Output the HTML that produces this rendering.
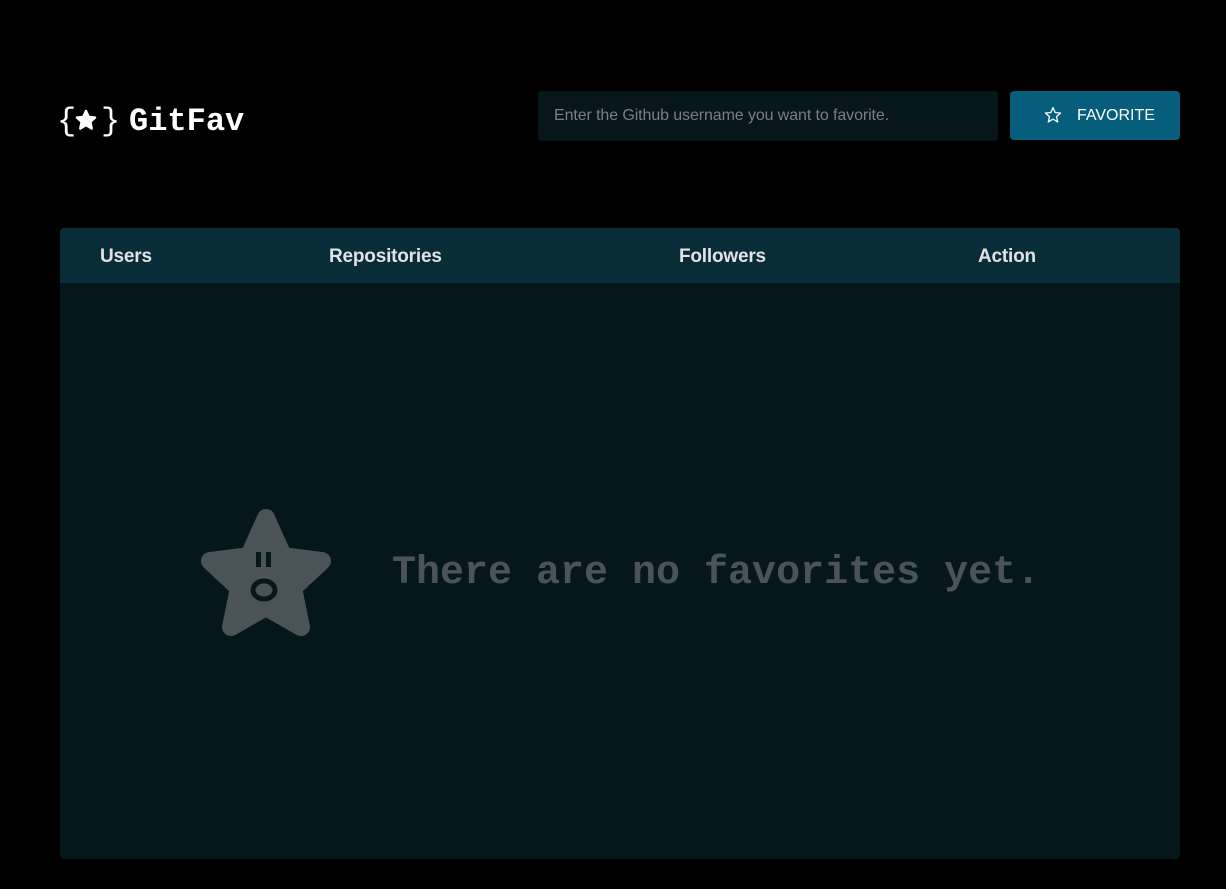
<!DOCTYPE html>
<html><head><meta charset="utf-8"><style>
*{margin:0;padding:0;box-sizing:border-box}
body{width:1226px;height:889px;background:#000;position:relative;overflow:hidden;font-family:"Liberation Sans",sans-serif}
.logo{position:absolute;left:57px;top:103px;height:40px;width:200px;color:#fff;font-family:"Liberation Mono",monospace;font-size:32px;}
.logo span{position:absolute;top:0}
.input{position:absolute;left:538px;top:91px;width:460px;height:50px;background:#06161b;border-radius:4px;color:#7c7c8a;font-size:16px;line-height:50px;padding-left:16px;letter-spacing:-0.1px}
.btn{position:absolute;left:1010px;top:91px;width:170px;height:49px;background:#065e7c;border-radius:4px;color:#fff;font-size:16px;line-height:49px}
.panel{position:absolute;left:60px;top:228px;width:1120px;height:631px;background:#06171c;border-radius:4px;overflow:hidden}
.head{height:55px;background:#092d38;position:relative;color:#e1e1e6;font-weight:bold;font-size:19px;letter-spacing:-0.2px}
.head span{position:absolute;top:18px}
.msg{position:absolute;left:332px;top:323px;font-family:"Liberation Mono",monospace;font-weight:bold;font-size:40px;color:#4a5357}
</style></head><body>
<div class="logo">
<span style="left:0">{</span>
<svg style="position:absolute;left:17px;top:5px" width="24" height="24" viewBox="0 0 24 24"><polygon points="12,3 14.8,9 21,9.6 16.3,13.8 17.7,20.5 12,17 6.3,20.5 7.7,13.8 3,9.6 9.2,9" fill="#fff" stroke="#fff" stroke-width="2.5" stroke-linejoin="round"/></svg>
<span style="left:44px">}</span>
<span style="left:72px;font-weight:bold">GitFav</span>
</div>
<div class="input">Enter the Github username you want to favorite.</div>
<div class="btn"><svg style="position:absolute;left:34px;top:15px" width="18" height="18" viewBox="0 0 18 18"><polygon points="9,1.5 11.2,6.6 16.6,7 12.5,10.6 13.7,16 9,13.1 4.3,16 5.5,10.6 1.4,7 6.8,6.6" fill="none" stroke="#fff" stroke-width="1.3" stroke-linejoin="round"/></svg><span style="position:absolute;left:67px">FAVORITE</span></div>
<div class="panel">
<div class="head"><span style="left:40px">Users</span><span style="left:269px">Repositories</span><span style="left:619px">Followers</span><span style="left:918px">Action</span></div>
<svg style="position:absolute;left:136px;top:278px" width="140" height="132" viewBox="0 0 140 132">
<polygon points="70,12 87,50 126,55 97,82 105,121 70,101 35,121 43,82 14,55 53,50" fill="#4a5357" stroke="#4a5357" stroke-width="18" stroke-linejoin="round"/>
<rect x="60" y="46" width="5" height="15" fill="#06171c"/><rect x="70" y="46" width="5" height="15" fill="#06171c"/>
<ellipse cx="68" cy="84" rx="11" ry="9" fill="none" stroke="#06171c" stroke-width="5"/>
</svg>
<div class="msg">There are no favorites yet.</div>
</div>
</body></html>
